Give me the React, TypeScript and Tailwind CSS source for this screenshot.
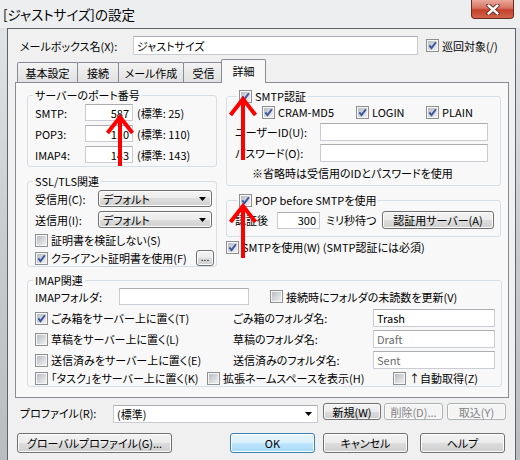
import React from 'react';

const jp = "font-['Noto_Sans_CJK_JP','Liberation_Sans',sans-serif] [font-feature-settings:'palt']";

function Box({ on = false }: { on?: boolean }) {
  return (
    <span className="relative inline-block w-[13px] h-[13px] shrink-0 border border-[#8e8f8f] bg-[#f6f6f6]">
      <span className="absolute left-[1px] top-[1px] w-[9px] h-[9px] bg-linear-to-br from-[#b8bdc3] to-[#f0f0f0]" />
      {on && (
        <svg className="absolute left-[-1px] top-[-1px]" width="13" height="13" viewBox="0 0 13 13">
          <path d="M3.3 6.4 L5.5 9.1 L9.9 3.3" fill="none" stroke="#3b56a0" strokeWidth="1.9" />
        </svg>
      )}
    </span>
  );
}

function Chk({ on = false, children, className = '' }: { on?: boolean; children: React.ReactNode; className?: string }) {
  return (
    <div className={`flex items-center gap-[3px] whitespace-nowrap ${className}`}>
      <Box on={on} />
      <span>{children}</span>
    </div>
  );
}

function Field({ children, className = '' }: { children?: React.ReactNode; className?: string }) {
  return (
    <div className={`flex items-center bg-white border border-[#c9ccd3] border-t-[#abadb3] px-[3px] whitespace-nowrap ${className}`}>
      {children}
    </div>
  );
}

function Tri() {
  return (
    <svg width="7" height="4" viewBox="0 0 7 4">
      <path d="M0 0 H7 L3.5 4 Z" fill="#000" />
    </svg>
  );
}

function Combo({ children, className = '' }: { children: React.ReactNode; className?: string }) {
  return (
    <div className={`flex items-center justify-between pl-[4px] pr-[5px] rounded-[3px] border border-[#707070] bg-[linear-gradient(#f3f3f3,#ebebeb_50%,#dddddd_50%,#d0d0d0)] shadow-[inset_0_0_0_1px_#fbfbfb] ${className}`}>
      <span>{children}</span>
      <Tri />
    </div>
  );
}

function Btn({ children, className = '', dis = false, def = false }: { children: React.ReactNode; className?: string; dis?: boolean; def?: boolean }) {
  const look = def
    ? 'border-[#3c7fb1] bg-[linear-gradient(#eaf6fd,#d9f0fc_50%,#bee6fd_50%,#a7d9f5)]'
    : dis
    ? 'border-[#adb2b5] bg-[#f4f4f4] text-[#838383]'
    : 'border-[#707070] bg-[linear-gradient(#f3f3f3,#ebebeb_50%,#dddddd_50%,#cfcfcf)]';
  return (
    <div className={`flex items-center justify-center rounded-[3px] border shadow-[inset_0_0_0_1px_#fcfcfc] whitespace-nowrap ${look} ${className}`}>
      {children}
    </div>
  );
}

function Group({ title, children, className = '', titleClass = 'left-[5px]' }: { title: React.ReactNode; children: React.ReactNode; className?: string; titleClass?: string }) {
  return (
    <div className={`relative border border-[#d5dfe5] rounded-[3px] ${className}`}>
      <div className={`absolute top-[-8px] h-[14px] px-[2px] bg-[#f8f8f8] flex items-center whitespace-nowrap ${titleClass}`}>{title}</div>
      {children}
    </div>
  );
}

function PortRow({ label, value, std }: { label: string; value: string; std: string }) {
  return (
    <div className="flex items-center h-[17px]">
      <span className="w-[50px]">{label}</span>
      <Field className="w-[48px] h-[17px] justify-end">{value}</Field>
      <span className="ml-[4px]">{std}</span>
    </div>
  );
}

function FolderRow({ on = false, check, label, value, gray = false }: { on?: boolean; check: string; label: string; value: string; gray?: boolean }) {
  return (
    <div className="flex items-center h-[18px]">
      <div className="w-[198px]"><Chk on={on}>{check}</Chk></div>
      <span className="w-[140px]">{label}</span>
      <Field className={`w-[122px] h-[18px] ${gray ? 'text-[#6d6d6d]' : ''}`}>{value}</Field>
    </div>
  );
}

function Arrow({ cx, top, bottom }: { cx: number; top: number; bottom: number }) {
  return (
    <path
      d={`M${cx - 12.5} ${top + 18} L${cx} ${top + 2} L${cx + 12.5} ${top + 18} M${cx} ${top + 3} L${cx} ${bottom}`}
      fill="none"
      stroke="#ff0000"
      strokeWidth="4"
    />
  );
}

export default function App() {
  return (
    <div className={`relative w-[520px] h-[460px] overflow-hidden bg-linear-to-b from-[#e4e7ea] via-[#c9cdd1] to-[#b9bdc1] text-[11px] leading-[14px] text-black ${jp}`}>
      {/* title bar */}
      <div className="relative h-[28px] bg-[#eceef0] flex items-center pl-[3px]">
        <span className="text-[13.5px] leading-[18px] pb-[1px]">[ジャストサイズ]の設定</span>
        <div className="absolute left-[471px] top-0 w-[43px] h-[19px] rounded-b-[4px] border border-t-0 border-[#6b2a20] bg-[linear-gradient(#eaa99b,#d7735f_45%,#c4402a_55%,#d2644c)] flex items-center justify-center">
          <svg width="14" height="11" viewBox="0 0 14 11">
            <path d="M2.5 1.5 L11.5 9.5 M11.5 1.5 L2.5 9.5" stroke="#5a2219" strokeWidth="4.2" strokeLinecap="round" />
            <path d="M2.5 1.5 L11.5 9.5 M11.5 1.5 L2.5 9.5" stroke="#ffffff" strokeWidth="2.4" strokeLinecap="round" />
          </svg>
        </div>
      </div>

      {/* client area */}
      <div className="ml-[7px] w-[509px] h-[432px] border-l border-t border-r border-[#5f6368] bg-[#f0f0f0] pl-[7px] pr-[6px]">
        {/* mailbox */}
        <div className="flex items-center h-[19px] mt-[7px] pl-[5px]">
          <span className="w-[113px]">メールボックス名(X):</span>
          <Field className="w-[285px] h-[19px]">ジャストサイズ</Field>
          <Chk on className="ml-[8px]">巡回対象(/)</Chk>
        </div>

        {/* tabs */}
        <div className="flex items-end h-[23px] mt-[4px] pl-[2px]">
          <div className="w-[61px] h-[20px] border border-b-0 border-[#898c95] rounded-t-[2px] bg-linear-to-b from-[#f3f3f3] to-[#e1e1e1] flex items-center justify-center">基本設定</div>
          <div className="w-[42px] h-[20px] -ml-px border border-b-0 border-[#898c95] rounded-t-[2px] bg-linear-to-b from-[#f3f3f3] to-[#e1e1e1] flex items-center justify-center">接続</div>
          <div className="w-[66px] h-[20px] -ml-px border border-b-0 border-[#898c95] rounded-t-[2px] bg-linear-to-b from-[#f3f3f3] to-[#e1e1e1] flex items-center justify-center">メール作成</div>
          <div className="w-[41px] h-[20px] -ml-px border border-b-0 border-[#898c95] rounded-t-[2px] bg-linear-to-b from-[#f3f3f3] to-[#e1e1e1] flex items-center justify-center">受信</div>
          <div className="relative z-10 w-[45px] h-[24px] -ml-[3px] -mb-px border border-b-0 border-[#898c95] rounded-t-[2px] bg-[#f8f8f8] flex items-center justify-center pb-[2px]">詳細</div>
        </div>

        {/* panel */}
        <div className="h-[316px] border border-[#898c95] bg-[#f8f8f8] pt-[12px] pl-[11px] pr-[6px]">
          <div className="flex gap-[9px]">
            {/* left column */}
            <div className="w-[190px] flex flex-col">
              <Group title="サーバーのポート番号" className="h-[72px]">
                <div className="pt-[8px] pl-[7px] flex flex-col gap-[4px]">
                  <PortRow label="SMTP:" value="587" std="(標準: 25)" />
                  <PortRow label="POP3:" value="110" std="(標準: 110)" />
                  <PortRow label="IMAP4:" value="143" std="(標準: 143)" />
                </div>
              </Group>
              <Group title="SSL/TLS関連" className="h-[86px] mt-[14px]">
                <div className="pt-[8px] pl-[7px] pr-[2px] flex flex-col">
                  <div className="flex items-center h-[17px]">
                    <span className="w-[63px]">受信用(C):</span>
                    <Combo className="w-[114px] h-[17px]">デフォルト</Combo>
                  </div>
                  <div className="flex items-center h-[17px] mt-[4px]">
                    <span className="w-[63px]">送信用(I):</span>
                    <Combo className="w-[114px] h-[17px]">デフォルト</Combo>
                  </div>
                  <Chk className="h-[16px] mt-[4px]">証明書を検証しない(S)</Chk>
                  <div className="flex items-center h-[16px] mt-[2px]">
                    <Chk on>クライアント証明書を使用(F)</Chk>
                    <Btn className="ml-auto w-[18px] h-[16px] text-[10px] leading-[10px] items-end pb-[3px]">...</Btn>
                  </div>
                </div>
              </Group>
            </div>

            {/* right column */}
            <div className="w-[275px] pt-[1px] flex flex-col">
              <Group title={<Chk on>SMTP認証</Chk>} titleClass="left-[10px]" className="h-[90px]">
                <div className="pt-[8px] flex flex-col">
                  <div className="flex items-center h-[14px] pl-[35px]">
                    <Chk on className="w-[94px]">CRAM-MD5</Chk>
                    <Chk on className="w-[70px]">LOGIN</Chk>
                    <Chk on>PLAIN</Chk>
                  </div>
                  <div className="flex items-center h-[18px] mt-[4px] pl-[8px]">
                    <span className="w-[85px]">ユーザーID(U):</span>
                    <Field className="w-[168px] h-[18px]" />
                  </div>
                  <div className="flex items-center h-[18px] mt-[3px] pl-[8px]">
                    <span className="w-[85px]">パスワード(O):</span>
                    <Field className="w-[168px] h-[18px]" />
                  </div>
                  <div className="h-[14px] mt-[4px] pl-[25px] whitespace-nowrap">※省略時は受信用のIDとパスワードを使用</div>
                </div>
              </Group>
              <Group title={<Chk on>POP before SMTPを使用</Chk>} titleClass="left-[10px]" className="h-[37px] mt-[14px]">
                <div className="pt-[10px] pl-[8px] pr-[6px] flex items-center h-[28px]">
                  <span className="w-[42px]">認証後</span>
                  <Field className="w-[43px] h-[17px] justify-end">300</Field>
                  <span className="ml-[6px]">ミリ秒待つ</span>
                  <Btn className="ml-auto w-[112px] h-[18px]">認証用サーバー(A)</Btn>
                </div>
              </Group>
              <Chk on className="h-[14px] mt-[3px]">SMTPを使用(W) (SMTP認証には必須)</Chk>
            </div>
          </div>

          {/* IMAP */}
          <Group title="IMAP関連" className="h-[107px] mt-[13px]">
            <div className="pt-[7px] pl-[7px] flex flex-col">
              <div className="flex items-center h-[17px]">
                <span className="w-[84px]">IMAPフォルダ:</span>
                <Field className="w-[130px] h-[17px]" />
                <Chk className="ml-[21px]">接続時にフォルダの未読数を更新(V)</Chk>
              </div>
              <div className="mt-[4px]">
                <FolderRow on check="ごみ箱をサーバー上に置く(T)" label="ごみ箱のフォルダ名:" value="Trash" />
              </div>
              <div className="mt-[3px]">
                <FolderRow check="草稿をサーバー上に置く(L)" label="草稿のフォルダ名:" value="Draft" gray />
              </div>
              <div className="mt-[3px]">
                <FolderRow check="送信済みをサーバー上に置く(E)" label="送信済みのフォルダ名:" value="Sent" gray />
              </div>
              <div className="flex items-center h-[16px] mt-[1px]">
                <div className="w-[172px]"><Chk>「タスク」をサーバー上に置く(K)</Chk></div>
                <div className="w-[186px]"><Chk>拡張ネームスペースを表示(H)</Chk></div>
                <Chk>↑自動取得(Z)</Chk>
              </div>
            </div>
          </Group>
        </div>

        {/* profile row */}
        <div className="flex items-start h-[20px] mt-[5px]">
          <span className="w-[93px] ml-[5px] self-center">プロファイル(R):</span>
          <Field className="w-[205px] h-[18px] mt-[2px] justify-between pr-[5px]">
            <span>(標準)</span>
            <Tri />
          </Field>
          <Btn className="w-[58px] h-[17px] ml-[5px]">新規(W)</Btn>
          <Btn dis className="w-[59px] h-[17px] ml-[3px]">削除(D)...</Btn>
          <Btn dis className="w-[59px] h-[17px] ml-[4px]">取込(Y)</Btn>
        </div>

        {/* buttons */}
        <div className="flex items-center h-[20px] mt-[10px]">
          <Btn className="w-[155px] h-[20px] ml-[2px]">グローバルプロファイル(G)...</Btn>
          <Btn def className="w-[85px] h-[20px] ml-[58px]">OK</Btn>
          <Btn className="w-[85px] h-[20px] ml-[8px]">キャンセル</Btn>
          <Btn className="w-[85px] h-[20px] ml-[12px]">ヘルプ</Btn>
        </div>
      </div>

      {/* red annotation arrows */}
      <svg className="absolute inset-0 pointer-events-none" width="520" height="460" viewBox="0 0 520 460">
        <Arrow cx={120} top={115} bottom={166} />
        <Arrow cx={243} top={97} bottom={160} />
        <Arrow cx={243} top={204} bottom={258} />
      </svg>
    </div>
  );
}
